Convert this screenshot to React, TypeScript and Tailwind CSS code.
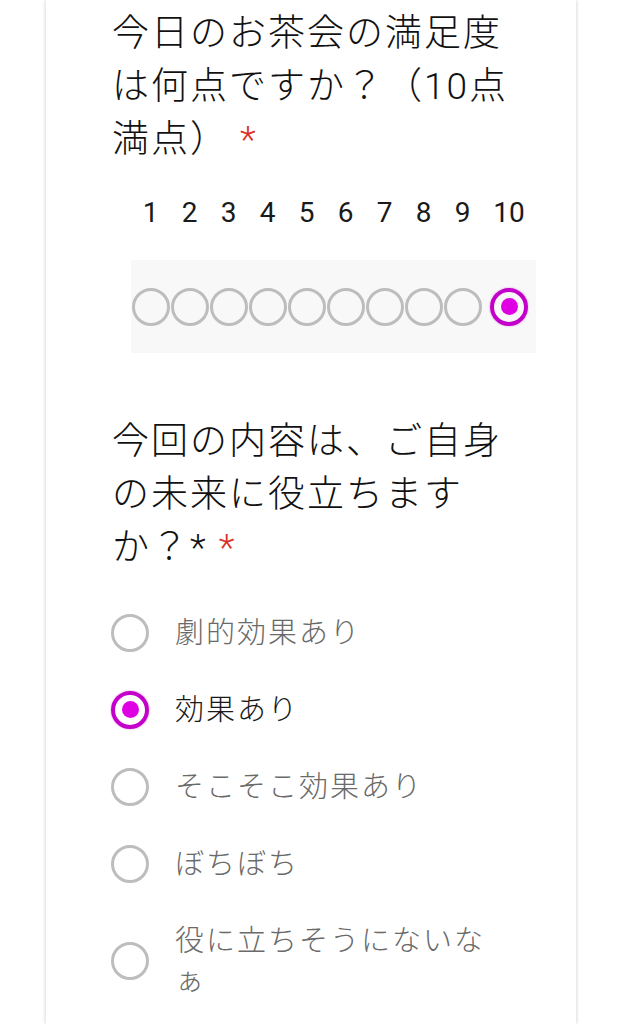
import React from "react";

const font = "font-['Roboto','Noto_Sans_CJK_JP',sans-serif]";

function Radio({ checked }: { checked?: boolean }) {
  if (checked) {
    return (
      <div className="flex h-[38px] w-[38px] shrink-0 items-center justify-center rounded-full border-[4px] border-[#c200ca] shadow-[0_0_2px_rgba(200,0,210,0.5)]">
        <div className="h-[17px] w-[17px] rounded-full bg-[#e000e4]" />
      </div>
    );
  }
  return <div className="h-[38px] w-[38px] shrink-0 rounded-full border-[3.5px] border-[#bdbdbd]" />;
}

const nums = [1, 2, 3, 4, 5, 6, 7, 8, 9, 10];

const options = [
  { label: "劇的効果あり", checked: false },
  { label: "効果あり", checked: true },
  { label: "そこそこ効果あり", checked: false },
  { label: "ぼちぼち", checked: false },
  { label: "役に立ちそうにないなぁ", checked: false },
];

export default function App() {
  return (
    <div className={`flex min-h-[1024px] justify-center bg-white ${font}`}>
      <div className="min-h-[1024px] w-[530px] bg-white pl-[66px] pt-[7px] shadow-[0_0_4px_rgba(0,0,0,0.22)]">
        <h2 className="w-[410px] text-[37px] font-light leading-[53px] tracking-[2px] text-[#111]">
          今日のお茶会の満足度は何点ですか？（10点満点）
          <span className="text-[#d93025]"> *</span>
        </h2>

        <div className="ml-[19px] mt-[31px] w-[405px]">
          <div className="flex h-[32px] items-center">
            {nums.map((n) => (
              <div
                key={n}
                className={`${n === 10 ? "w-[54px]" : "w-[39px]"} text-center text-[28px] leading-[32px] text-[#1a1a1a]`}
              >
                {n}
              </div>
            ))}
          </div>
          <div className="mt-[31px] flex h-[93px] items-center bg-[#f8f8f8]">
            {nums.map((n) => (
              <div
                key={n}
                className={`${n === 10 ? "w-[54px]" : "w-[39px]"} flex justify-center`}
              >
                <Radio checked={n === 10} />
              </div>
            ))}
          </div>
        </div>

        <h2 className="mt-[62px] w-[410px] text-[37px] font-light leading-[53px] tracking-[2px] text-[#111]">
          今回の内容は、ご自身の未来に役立ちますか？*
          <span className="text-[#d93025]">&nbsp;*</span>
        </h2>

        <div className="mt-[20px] flex flex-col">
          {options.map((o) => (
            <div key={o.label} className="flex items-center gap-[26px] py-[18.5px]">
              <div className="-ml-[1px]">
                <Radio checked={o.checked} />
              </div>
              <div
                className={`w-[325px] text-[29px] font-light leading-[40px] tracking-[2px] [line-break:anywhere] ${
                  o.checked ? "text-[#1a1a1a]" : "text-[#6a6a6a]"
                }`}
              >
                {o.label}
              </div>
            </div>
          ))}
        </div>
      </div>
    </div>
  );
}
